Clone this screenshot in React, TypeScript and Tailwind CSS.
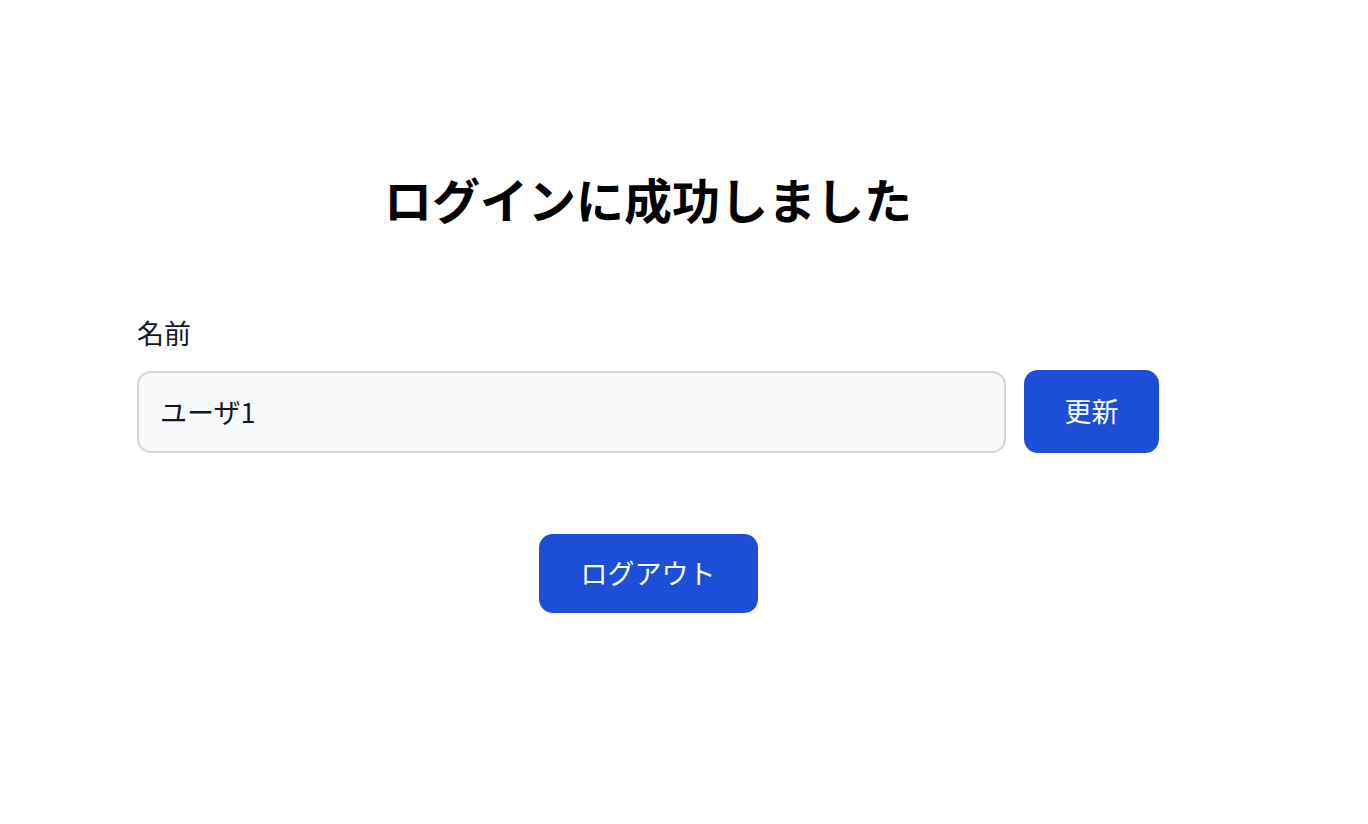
import { useState } from 'react'

export default function App() {
  const [name, setName] = useState('ユーザ1')

  return (
    <div className="min-h-screen bg-white font-['Noto_Sans_CJK_JP','Noto_Sans',sans-serif]">
      <div className="ml-[137px] flex w-[1022px] flex-col pt-[170px]">
        <h1 className="text-center text-[48px] leading-[56px] font-bold text-black">
          ログインに成功しました
        </h1>
        <label className="mt-[89px] text-[27px] leading-[36px] text-gray-900">名前</label>
        <div className="mt-[19px] flex items-center gap-[18px]">
          <input
            value={name}
            onChange={(e) => setName(e.target.value)}
            className="h-[82px] w-[870px] rounded-[14px] border-2 border-[#d1d5db] bg-[#f8f9fb] px-[21px] text-[27px] text-gray-900 outline-none"
          />
          <button className="h-[83px] w-[135px] rounded-[14px] bg-[#1d4ed8] text-[27px] text-white">
            更新
          </button>
        </div>
        <div className="mt-[81px] flex justify-center">
          <button className="h-[79px] w-[219px] rounded-[14px] bg-[#1d4ed8] text-[27px] text-white">
            ログアウト
          </button>
        </div>
      </div>
    </div>
  )
}
